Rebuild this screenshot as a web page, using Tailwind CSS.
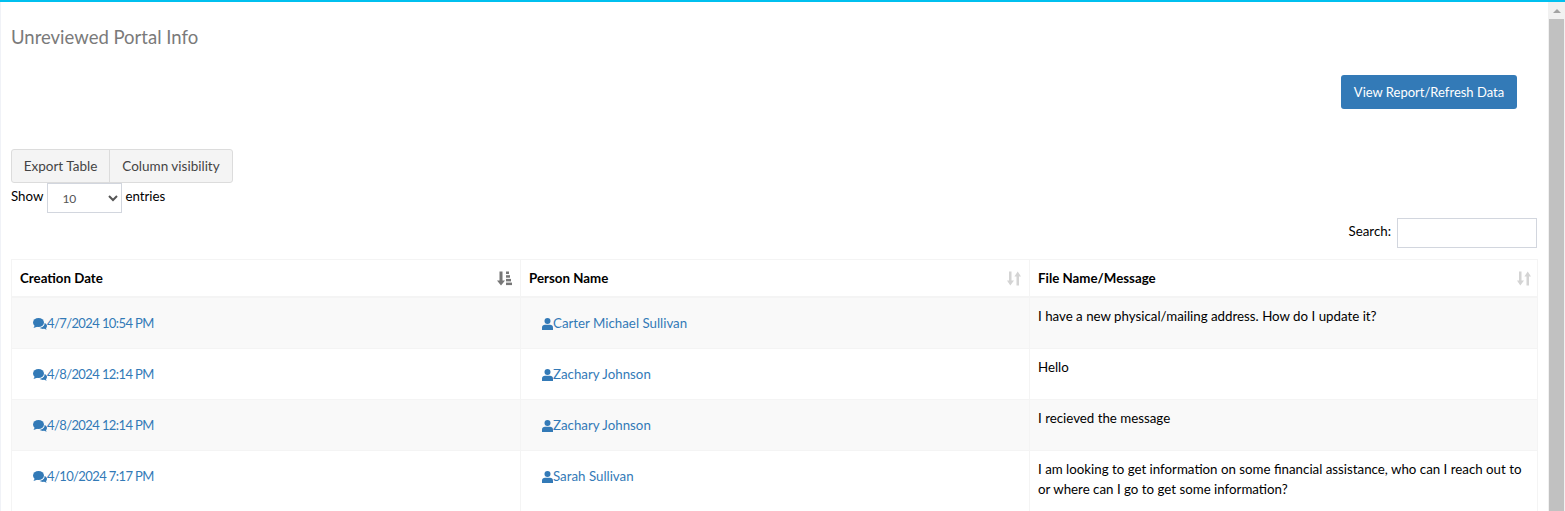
<!DOCTYPE html>
<html lang="en">
<head>
    <meta charset="UTF-8">
    <title>Unreviewed Portal Info</title>
    <script src="https://cdn.jsdelivr.net/npm/@tailwindcss/browser@4"></script>
</head>
<body class="h-screen overflow-hidden bg-white font-['Lato',sans-serif] text-[13.3px] text-black">
<div class="flex h-[511px] flex-col border-t-2 border-[#00c0ef]">
    <div class="flex min-h-0 flex-1">
        <main class="w-[1548px] overflow-hidden border-l border-[#f0f2f7] pl-[10px] pr-[11px]">
            <h1 class="mt-[22px] h-[26px] text-[18.5px] leading-[26px] text-[#7a7a7a]">Unreviewed Portal Info</h1>
            <div class="mt-[25px] flex justify-end pr-[20px]">
                <button class="h-[34px] w-[176px] rounded-[3px] bg-[#337ab7] pt-[2px] text-[13px] text-white">View Report/Refresh Data</button>
            </div>
            <div class="mt-[40px] flex h-[34px] w-[222px] rounded-[3px] border border-[#dcdcdc] bg-[#f4f4f4] text-[13.5px] text-[#444]">
                <button class="w-[98px] border-r border-[#dcdcdc]">Export Table</button>
                <button class="flex-1">Column visibility</button>
            </div>
            <div class="flex h-[30px] items-center">
                <span class="-mt-[3px]">Show</span>
                <select class="mr-[3px] ml-[4px] h-[30px] w-[75px] border border-[#d2d6de] bg-white pl-[10px] text-[12px] text-[#555]">
                    <option>10</option>
                </select>
                <span class="-mt-[3px]">entries</span>
            </div>
            <div class="mt-[5px] flex h-[30px] items-center justify-end gap-[6px]">
                <span class="-mt-[3px]">Search:</span>
                <input type="text" class="h-[30px] w-[140px] border border-[#d2d6de]">
            </div>
            <table class="mt-[11px] w-[1526px] table-fixed border-collapse">
                <colgroup>
                    <col class="w-[509px]">
                    <col class="w-[509px]">
                    <col class="w-[508px]">
                </colgroup>
                <thead>
                    <tr class="h-[37px] border border-[#f4f4f4] border-b-[2px]">
                        <th class="border-r border-[#f4f4f4] px-2 pt-[2px] text-left font-bold">
                            <div class="flex items-center justify-between">Creation Date
                                <svg class="h-[15px] w-[15px]" viewBox="0 0 15 14" fill="#777"><path d="M2.5 0h3v9h2.5L4 14 0 9h2.5z"/><rect x="9" y="0" width="3" height="2.5"/><rect x="9" y="3.7" width="4" height="2.5"/><rect x="9" y="7.4" width="5" height="2.5"/><rect x="9" y="11.100" width="6" height="2.5"/></svg>
                            </div>
                        </th>
                        <th class="border-r border-[#f4f4f4] px-2 pt-[2px] text-left font-bold">
                            <div class="flex items-center justify-between">Person Name
                                <svg class="h-[15px] w-[14px]" viewBox="0 0 14 14" fill="#d4d4d4"><path d="M2 0h2.5v9H7l-3.7 5L0 9h2z"/><path d="M9.5 14h2.5V5h2L10.700 0 7.400 5h2.100z"/></svg>
                            </div>
                        </th>
                        <th class="border-r border-[#f4f4f4] px-2 pt-[2px] pr-[6px] text-left font-bold">
                            <div class="flex items-center justify-between">File Name/Message
                                <svg class="h-[15px] w-[14px]" viewBox="0 0 14 14" fill="#d4d4d4"><path d="M2 0h2.5v9H7l-3.7 5L0 9h2z"/><path d="M9.5 14h2.5V5h2L10.700 0 7.400 5h2.100z"/></svg>
                            </div>
                        </th>
                    </tr>
                </thead>
                <tbody>
                    <tr class="h-[52px] border border-[#f4f4f4] bg-[#f9f9f9]">
                        <td class="border-r border-[#f4f4f4] pt-[2px] pl-[21px]"><a href="#" class="flex items-center text-[13px] tracking-[-0.6px] text-[#337ab7]">
                            <svg class="h-[12px] w-[14px]" viewBox="0 0 14 12" fill="#337ab7"><ellipse cx="5.5" cy="4.5" rx="5.5" ry="4.5"/><path d="M2 7l-1.5 3L5 8.5z"/><path d="M11.5 5c1.6.6 2.5 1.7 2.5 3 0 .9-.4 1.6-1 2.2l.6 1.6-2.4-1c-1.6.4-3.5 0-4.6-1 2.900-.2 5.200-2 4.900-4.800z"/></svg>4/7/2024 10:54 PM</a></td>
                        <td class="border-r border-[#f4f4f4] pt-[2px] pl-[21px]"><a href="#" class="flex items-center text-[#337ab7]">
                            <svg class="h-[12px] w-[11px]" viewBox="0 0 11 12" fill="#337ab7"><circle cx="5.500" cy="3" r="3"/><path d="M0 12V9.500C0 7.800 1.300 6.800 3 6.800h5c1.700 0 3 1 3 2.700V12z"/></svg>Carter Michael Sullivan</a></td>
                        <td class="border-r border-[#f4f4f4] px-2 pt-2 align-top leading-[20px]">I have a new physical/mailing address. How do I update it?</td>
                    </tr>
                    <tr class="h-[51px] border border-[#f4f4f4] bg-white">
                        <td class="border-r border-[#f4f4f4] pt-[2px] pl-[21px]"><a href="#" class="flex items-center text-[13px] tracking-[-0.6px] text-[#337ab7]">
                            <svg class="h-[12px] w-[14px]" viewBox="0 0 14 12" fill="#337ab7"><ellipse cx="5.5" cy="4.5" rx="5.5" ry="4.5"/><path d="M2 7l-1.5 3L5 8.5z"/><path d="M11.5 5c1.6.6 2.5 1.7 2.5 3 0 .9-.4 1.6-1 2.2l.6 1.6-2.4-1c-1.6.4-3.5 0-4.6-1 2.900-.2 5.200-2 4.900-4.800z"/></svg>4/8/2024 12:14 PM</a></td>
                        <td class="border-r border-[#f4f4f4] pt-[2px] pl-[21px]"><a href="#" class="flex items-center text-[#337ab7]">
                            <svg class="h-[12px] w-[11px]" viewBox="0 0 11 12" fill="#337ab7"><circle cx="5.500" cy="3" r="3"/><path d="M0 12V9.500C0 7.800 1.300 6.800 3 6.800h5c1.700 0 3 1 3 2.700V12z"/></svg>Zachary Johnson</a></td>
                        <td class="border-r border-[#f4f4f4] px-2 pt-2 align-top leading-[20px]">Hello</td>
                    </tr>
                    <tr class="h-[51px] border border-[#f4f4f4] bg-[#f9f9f9]">
                        <td class="border-r border-[#f4f4f4] pt-[2px] pl-[21px]"><a href="#" class="flex items-center text-[13px] tracking-[-0.6px] text-[#337ab7]">
                            <svg class="h-[12px] w-[14px]" viewBox="0 0 14 12" fill="#337ab7"><ellipse cx="5.5" cy="4.5" rx="5.5" ry="4.5"/><path d="M2 7l-1.5 3L5 8.5z"/><path d="M11.5 5c1.6.6 2.5 1.7 2.5 3 0 .9-.4 1.6-1 2.2l.6 1.6-2.4-1c-1.6.4-3.5 0-4.6-1 2.900-.2 5.200-2 4.900-4.800z"/></svg>4/8/2024 12:14 PM</a></td>
                        <td class="border-r border-[#f4f4f4] pt-[2px] pl-[21px]"><a href="#" class="flex items-center text-[#337ab7]">
                            <svg class="h-[12px] w-[11px]" viewBox="0 0 11 12" fill="#337ab7"><circle cx="5.500" cy="3" r="3"/><path d="M0 12V9.500C0 7.800 1.300 6.800 3 6.800h5c1.700 0 3 1 3 2.700V12z"/></svg>Zachary Johnson</a></td>
                        <td class="border-r border-[#f4f4f4] px-2 pt-2 align-top leading-[20px]">I recieved the message</td>
                    </tr>
                    <tr class="h-[62px] border border-[#f4f4f4] bg-white">
                        <td class="border-r border-[#f4f4f4] pb-[10px] pl-[21px]"><a href="#" class="flex items-center text-[13px] tracking-[-0.6px] text-[#337ab7]">
                            <svg class="h-[12px] w-[14px]" viewBox="0 0 14 12" fill="#337ab7"><ellipse cx="5.5" cy="4.5" rx="5.5" ry="4.5"/><path d="M2 7l-1.5 3L5 8.5z"/><path d="M11.5 5c1.6.6 2.5 1.7 2.5 3 0 .9-.4 1.6-1 2.2l.6 1.6-2.4-1c-1.6.4-3.5 0-4.6-1 2.900-.2 5.200-2 4.900-4.800z"/></svg>4/10/2024 7:17 PM</a></td>
                        <td class="border-r border-[#f4f4f4] pb-[10px] pl-[21px]"><a href="#" class="flex items-center text-[#337ab7]">
                            <svg class="h-[12px] w-[11px]" viewBox="0 0 11 12" fill="#337ab7"><circle cx="5.500" cy="3" r="3"/><path d="M0 12V9.500C0 7.800 1.300 6.800 3 6.800h5c1.700 0 3 1 3 2.700V12z"/></svg>Sarah Sullivan</a></td>
                        <td class="border-r border-[#f4f4f4] px-2 pt-2 align-top leading-[20px]">I am looking to get information on some financial assistance, who can I reach out to or where can I go to get some information?</td>
                    </tr>
                </tbody>
            </table>
        </main>
        <aside class="flex w-[17px] flex-col bg-[#f1f1f1]">
            <div class="flex h-[17px] items-center justify-center">
                <div class="h-0 w-0 border-x-[4px] border-b-[4px] border-x-transparent border-b-[#a3a3a3]"></div>
            </div>
            <div class="mx-auto h-[492px] w-[15px] bg-[#c1c1c1]"></div>
        </aside>
    </div>
</div>
</body>
</html>
